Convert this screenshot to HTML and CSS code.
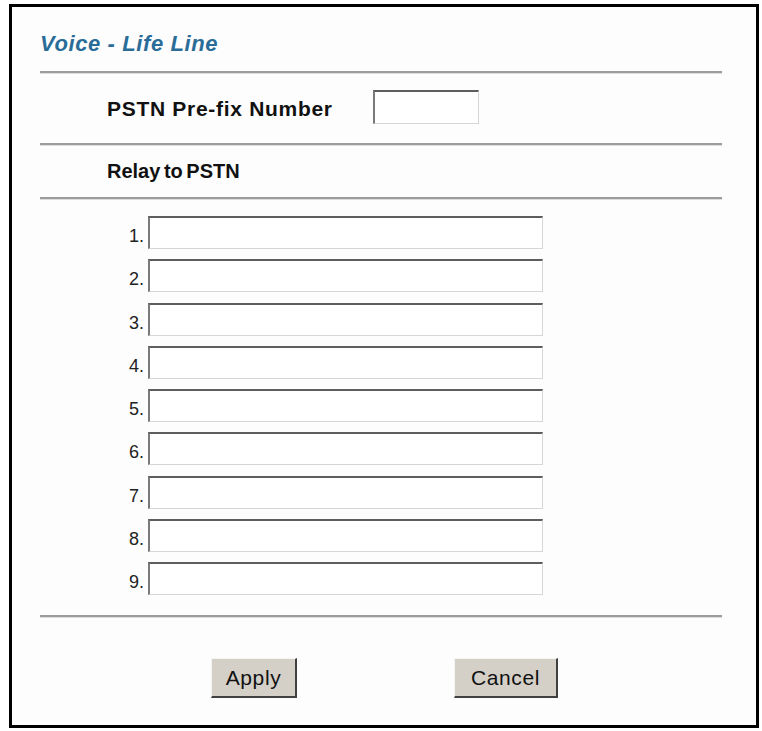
FILE: index.html
```html
<!DOCTYPE html>
<html lang="en">
  <head>
    <meta charset="UTF-8" />
    <title>Voice - Life Line</title>
    <link rel="stylesheet" href="styles.css">
  </head>
  <body>
    <div class="frame">
      <h1 class="title">Voice - Life Line</h1>
      <div class="rule"></div>

      <div class="prefix-row">
        <span class="field-label">PSTN Pre-fix Number</span>
        <input type="text" class="text-box prefix-box">
      </div>
      <div class="rule"></div>

      <div class="section-row">
        <span class="field-label section-label">Relay to PSTN</span>
      </div>
      <div class="rule"></div>

      <div class="relay-list">
        <div class="relay-item"><span class="relay-num">1.</span><input type="text" class="text-box relay-box"></div>
        <div class="relay-item"><span class="relay-num">2.</span><input type="text" class="text-box relay-box"></div>
        <div class="relay-item"><span class="relay-num">3.</span><input type="text" class="text-box relay-box"></div>
        <div class="relay-item"><span class="relay-num">4.</span><input type="text" class="text-box relay-box"></div>
        <div class="relay-item"><span class="relay-num">5.</span><input type="text" class="text-box relay-box"></div>
        <div class="relay-item"><span class="relay-num">6.</span><input type="text" class="text-box relay-box"></div>
        <div class="relay-item"><span class="relay-num">7.</span><input type="text" class="text-box relay-box"></div>
        <div class="relay-item"><span class="relay-num">8.</span><input type="text" class="text-box relay-box"></div>
        <div class="relay-item"><span class="relay-num">9.</span><input type="text" class="text-box relay-box"></div>
      </div>
      <div class="rule"></div>

      <div class="buttons">
        <button class="btn btn-apply">Apply</button>
        <button class="btn btn-cancel">Cancel</button>
      </div>
    </div>
  </body>
</html>
```

FILE: styles.css
```css
* {
  margin: 0;
  padding: 0;
  box-sizing: border-box;
}

body {
  font-family: "Liberation Sans", Arial, sans-serif;
  background: #ffffff;
  color: #111;
}

.frame {
  margin: 4px 0 0 9px;
  width: 750px;
  height: 724px;
  border: 3px solid #000;
  background: #fdfdfd;
  padding: 24px 34px 0 28px;
}

.title {
  font-size: 22px;
  line-height: 26px;
  font-weight: bold;
  font-style: italic;
  letter-spacing: 0.6px;
  color: #2a6c98;
  margin-bottom: 14px;
}

.rule {
  height: 3px;
  border-top: 2px solid #9c9c9c;
  border-bottom: 1px solid #dedede;
}

.prefix-row {
  display: flex;
  align-items: center;
  height: 69px;
  padding-left: 67px;
}

.field-label {
  font-size: 21px;
  font-weight: bold;
  letter-spacing: 0.7px;
  color: #111;
}

.prefix-row .field-label {
  width: 266px;
}

.prefix-box {
  width: 106px;
  margin-top: -3px;
}

.section-row {
  display: flex;
  align-items: center;
  height: 51px;
  padding-left: 67px;
}

.section-label {
  font-size: 20px;
  letter-spacing: 0;
  word-spacing: -2px;
}

.text-box {
  height: 34px;
  border-style: solid;
  border-width: 2px 1px 1px 2px;
  border-color: #5e5e5e #d6d6d6 #d6d6d6 #7a7a7a;
  background: #fff;
  font-family: inherit;
  font-size: 16px;
  outline: none;
}

.relay-list {
  display: flex;
  flex-direction: column;
  gap: 10.3px;
  padding: 16px 0 20px 0;
}

.relay-item {
  display: flex;
  align-items: flex-end;
}

.relay-num {
  width: 108px;
  text-align: right;
  padding-right: 4px;
  font-size: 18px;
  line-height: 20px;
  padding-bottom: 3px;
  color: #222;
}

.relay-box {
  width: 395px;
  height: 33px;
}

.buttons {
  display: flex;
  padding: 40px 0 0 171px;
  gap: 157px;
}

.btn {
  height: 40px;
  background: #d4d0c8;
  border-style: solid;
  border-width: 1px 2px 2px 1px;
  border-color: #f4f4f4 #404040 #404040 #f4f4f4;
  font-family: inherit;
  font-size: 21px;
  letter-spacing: 0.6px;
  color: #111;
}

.btn-apply {
  width: 86px;
}

.btn-cancel {
  width: 104px;
}
```
